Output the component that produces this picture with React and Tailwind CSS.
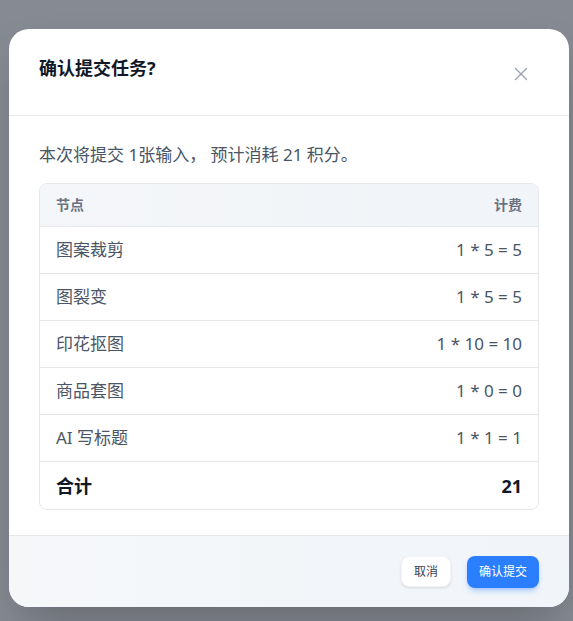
import { X } from "lucide-react";

const rows = [
  { name: "图案裁剪", cost: "1 * 5 = 5" },
  { name: "图裂变", cost: "1 * 5 = 5" },
  { name: "印花抠图", cost: "1 * 10 = 10" },
  { name: "商品套图", cost: "1 * 0 = 0" },
  { name: "AI 写标题", cost: "1 * 1 = 1" },
];

export default function App() {
  return (
    <div
      className="min-h-[621px] bg-[#868a93] pl-[9px] pt-[29px]"
      style={{ fontFamily: '"Noto Sans", "Noto Sans CJK SC", sans-serif' }}
    >
      <div className="w-[560px] overflow-hidden rounded-[20px] bg-white shadow-2xl">
        <div className="flex h-[87px] items-start justify-between border-b border-gray-200 pl-[30px] pr-[30px] pt-[25px]">
          <h2 className="text-lg leading-7 font-bold text-gray-900">确认提交任务?</h2>
          <button className="mt-[2px] flex h-9 w-9 items-center justify-center text-gray-400">
            <X size={22} strokeWidth={1.4} />
          </button>
        </div>

        <div className="px-[30px] pt-[27px] pb-[25px]">
          <p className="text-[17px] leading-6 text-gray-600">本次将提交 1张输入， 预计消耗 21 积分。</p>
          <div className="mt-4 overflow-hidden rounded-lg border border-gray-200">
            <div className="flex h-[43px] items-center justify-between border-b border-gray-200 bg-gradient-to-r from-[#f4f6f9] to-[#f1f4f8] px-4 text-sm font-semibold text-gray-500">
              <span>节点</span>
              <span>计费</span>
            </div>
            {rows.map((r) => (
              <div
                key={r.name}
                className="flex h-[47px] items-center justify-between border-b border-gray-200 px-4 text-[17px] text-gray-600"
              >
                <span>{r.name}</span>
                <span>{r.cost}</span>
              </div>
            ))}
            <div className="flex h-[47px] items-center justify-between px-4 text-lg font-bold text-gray-900">
              <span>合计</span>
              <span>21</span>
            </div>
          </div>
        </div>

        <div className="flex h-[72px] items-center justify-end gap-4 border-t border-gray-200 bg-gradient-to-r from-[#f5f7f9] to-[#f1f5f9] pr-[30px]">
          <button className="h-[31px] rounded-lg border border-gray-100 bg-white px-3 text-xs text-gray-700 shadow-sm">
            取消
          </button>
          <button className="h-8 rounded-lg bg-blue-500 px-3 text-xs text-white shadow-md shadow-blue-500/30">
            确认提交
          </button>
        </div>
      </div>
    </div>
  );
}
